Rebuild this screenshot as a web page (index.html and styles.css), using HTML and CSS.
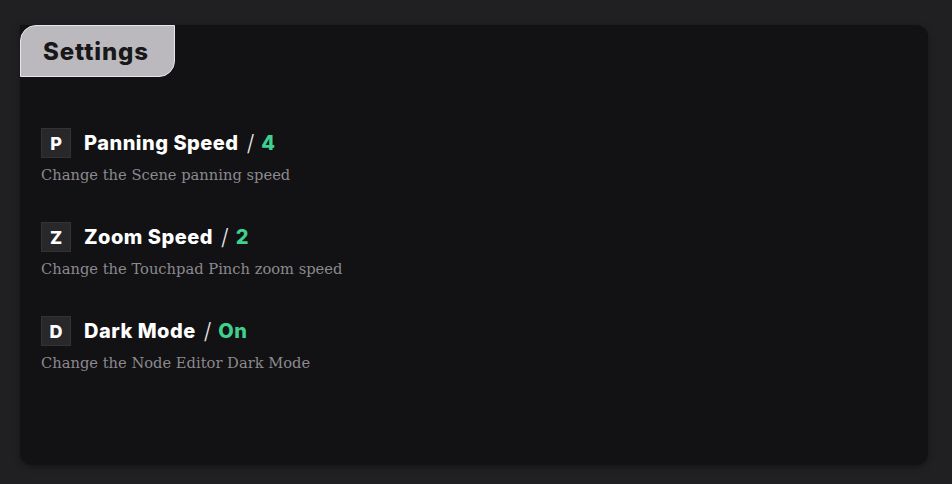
FILE: index.html
```html
<!DOCTYPE html>
<html>
<head>
<meta charset="utf-8">
<link rel="stylesheet" href="styles.css">
</head>
<body>
<div class="panel">
  <div class="tab">Settings</div>
  <div class="list">
    <div class="item">
      <div class="head">
        <span class="key">P</span>
        <span class="title">Panning Speed</span>
        <span class="slash">/</span>
        <span class="value">4</span>
      </div>
      <div class="desc">Change the Scene panning speed</div>
    </div>
    <div class="item">
      <div class="head">
        <span class="key">Z</span>
        <span class="title">Zoom Speed</span>
        <span class="slash">/</span>
        <span class="value">2</span>
      </div>
      <div class="desc">Change the Touchpad Pinch zoom speed</div>
    </div>
    <div class="item">
      <div class="head">
        <span class="key">D</span>
        <span class="title">Dark Mode</span>
        <span class="slash">/</span>
        <span class="value">On</span>
      </div>
      <div class="desc">Change the Node Editor Dark Mode</div>
    </div>
  </div>
</div>
</body>
</html>
```
FILE: styles.css
```css
html, body {
  margin: 0;
  padding: 0;
  background: #201f22;
  height: 100%;
}
body {
  padding: 25px 24px 19px 20px;
  box-sizing: border-box;
  height: 484px;
}
.panel {
  height: 440px;
  background: #121114;
  border-radius: 0 12px 12px 12px;
  box-shadow: 0 2px 6px rgba(0,0,0,0.35);
  display: flex;
  flex-direction: column;
}
.tab {
  align-self: flex-start;
  width: 155px;
  height: 52px;
  box-sizing: border-box;
  background: #bbb9bd;
  border: 1px solid #e6e5e8;
  border-radius: 16px 0 16px 0;
  font-family: "Inter", sans-serif;
  font-weight: 800;
  font-size: 24px;
  letter-spacing: 0.9px;
  color: #18171a;
  padding-left: 22px;
  padding-top: 1px;
  display: flex;
  align-items: center;
}
.list {
  padding: 51px 0 0 21px;
  display: flex;
  flex-direction: column;
  gap: 33px;
}
.item {
  display: flex;
  flex-direction: column;
}
.head {
  display: flex;
  align-items: center;
  height: 30px;
  font-family: "Inter", sans-serif;
}
.key {
  width: 30px;
  height: 30px;
  box-sizing: border-box;
  background: #28272a;
  border: 1px solid #333235;
  color: #ffffff;
  font-weight: 800;
  font-size: 18px;
  display: flex;
  align-items: center;
  justify-content: center;
  margin-right: 13px;
}
.title {
  color: #ffffff;
  font-weight: 800;
  font-size: 20px;
  letter-spacing: 0.5px;
}
.slash {
  color: #e8e8e8;
  font-weight: 300;
  font-size: 22px;
  margin: 0 7px 0 8px;
}
.value {
  color: #3fcf8e;
  font-weight: 800;
  font-size: 20px;
  letter-spacing: 0.5px;
}
.desc {
  margin-top: 3px;
  font-family: "DejaVu Serif", serif;
  font-size: 14.7px;
  color: #8b8a8e;
  line-height: 28px;
}
```
